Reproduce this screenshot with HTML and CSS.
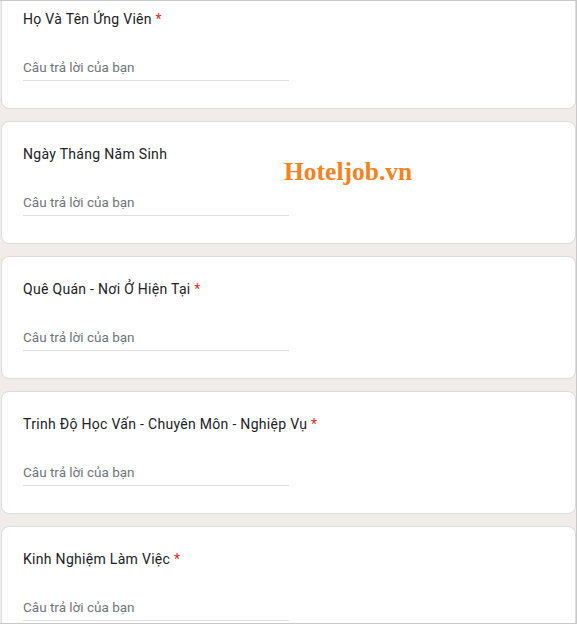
FILE: index.html
```html
<!DOCTYPE html>
<html lang="vi">
<head>
<meta charset="utf-8">
<title>Form</title>
<link rel="stylesheet" href="styles.css">
</head>
<body>
<div class="frame">
  <div class="list">
    <section class="card">
      <div class="q-title">Họ Và Tên Ứng Viên <span class="req">*</span></div>
      <div class="answer">Câu trả lời của bạn</div>
    </section>
    <section class="card">
      <div class="q-title">Ngày Tháng Năm Sinh</div>
      <div class="answer">Câu trả lời của bạn</div>
    </section>
    <section class="card">
      <div class="q-title">Quê Quán - Nơi Ở Hiện Tại <span class="req">*</span></div>
      <div class="answer">Câu trả lời của bạn</div>
    </section>
    <section class="card">
      <div class="q-title">Trinh Độ Học Vấn - Chuyên Môn - Nghiệp Vụ <span class="req">*</span></div>
      <div class="answer">Câu trả lời của bạn</div>
    </section>
    <section class="card">
      <div class="q-title">Kinh Nghiệm Làm Việc <span class="req">*</span></div>
      <div class="answer">Câu trả lời của bạn</div>
    </section>
  </div>
  <div class="watermark">Hoteljob.vn</div>
</div>
</body>
</html>
```

FILE: styles.css
```css
html, body {
  margin: 0;
  padding: 0;
  background: #f1ebe9;
}

.frame {
  position: relative;
  height: 624px;
  box-sizing: border-box;
  border-top: 1px solid #c9c9c9;
  border-right: 1px solid #c9c9c9;
  border-bottom: 1px solid #c9c9c9;
  overflow: hidden;
  background: #f1ebe9;
}

.list {
  display: flex;
  flex-direction: column;
  gap: 12px;
  margin-top: -15px;
  padding-left: 1px;
}

.card {
  height: 123px;
  box-sizing: border-box;
  background: #ffffff;
  border: 1px solid #dadce0;
  border-radius: 8px;
  padding: 22px 21px 0 21px;
  display: flex;
  flex-direction: column;
  font-family: Roboto, "Liberation Sans", Arial, sans-serif;
}

.q-title {
  font-size: 14px;
  line-height: 20px;
  letter-spacing: 0.3px;
  color: #202124;
}

.req {
  color: #d93025;
}

.answer {
  margin-top: 29px;
  width: 266px;
  font-size: 13.5px;
  line-height: 18px;
  color: #70757a;
  padding-bottom: 4px;
  border-bottom: 1px solid #e0e0e0;
}

.watermark {
  position: absolute;
  left: 284px;
  top: 158px;
  font-family: "Liberation Serif", "Times New Roman", serif;
  font-weight: bold;
  font-size: 25.5px;
  line-height: 25.5px;
  color: #f5821f;
  white-space: nowrap;
}
```
